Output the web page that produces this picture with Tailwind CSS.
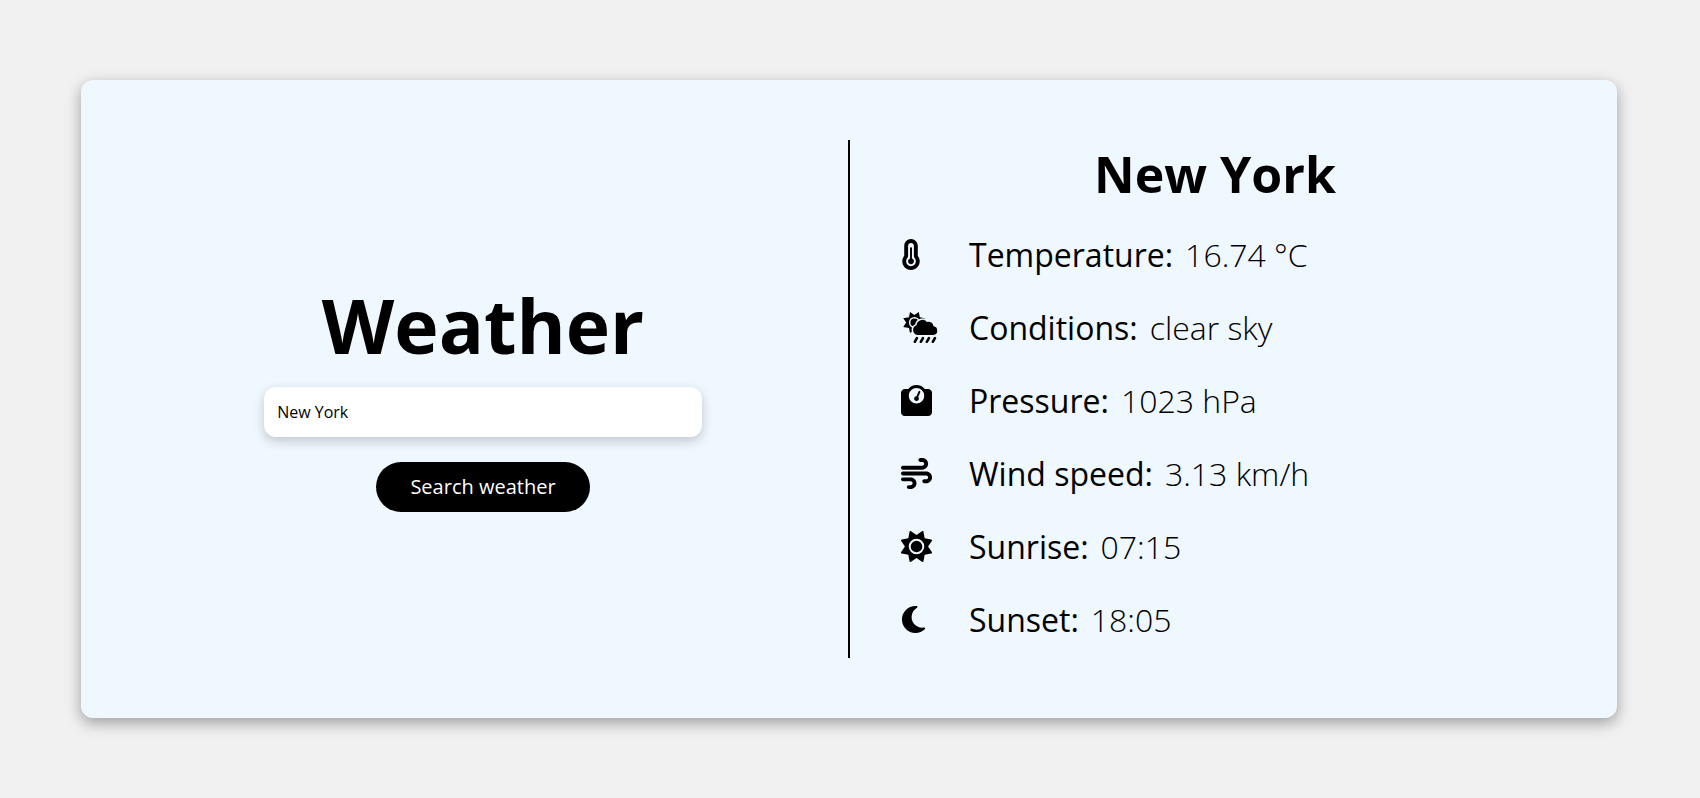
<!DOCTYPE html>
<html lang="en">
<head>
<meta charset="utf-8">
<meta name="viewport" content="width=device-width, initial-scale=1">
<title>Weather</title>
<script src="https://cdn.jsdelivr.net/npm/@tailwindcss/browser@4"></script>
</head>
<body class="flex min-h-screen items-center bg-[#f1f1f1] pr-[83px] pl-[81px] py-20 font-['Open_Sans',sans-serif] text-black">
<main class="grid w-full grid-cols-[1fr_2px_1fr] gap-x-[23px] rounded-xl bg-[#eff7ff] p-[60px] shadow-[0_5px_15px_rgba(0,0,0,0.35)]">
  <form class="flex flex-col items-center justify-center pb-3" onsubmit="return false">
    <h1 class="mb-3 text-[75px] leading-[100px] font-bold">Weather</h1>
    <input type="text" aria-label="City" value="New York" class="mb-[25px] h-[50px] w-[64%] rounded-xl bg-white px-[13px] text-base shadow-[0_4px_12px_rgba(0,0,0,0.2)] outline-none">
    <button type="submit" class="h-[50px] rounded-full bg-black px-[34px] text-xl font-medium text-white">Search weather</button>
  </form>
  <div class="bg-black"></div>
  <section class="pb-[2px]">
    <h2 class="mb-[10px] text-center text-[50px] leading-[68px] font-bold">New York</h2>
    <dl class="pl-7 text-[32px] leading-[73px] font-[350]">
      <div class="flex items-center">
        <dt class="flex items-center font-normal"><span class="w-[68px]"><svg class="h-[31px] w-5" viewBox="0 0 320 512" fill="currentColor" aria-hidden="true"><path d="M160 64c-26.5 0-48 21.5-48 48V276.5c0 17.3-7.1 31.9-15.3 42.5C86.2 332.6 80 349.5 80 368c0 44.2 35.8 80 80 80s80-35.8 80-80c0-18.5-6.2-35.4-16.7-48.9c-8.2-10.6-15.3-25.2-15.3-42.5V112c0-26.5-21.5-48-48-48zM48 112C48 50.2 98.1 0 160 0s112 50.1 112 112V276.5c0 .1 .1 .3 .2 .6c.2 .6 .8 1.6 1.7 2.8c18.9 24.4 30.1 55 30.1 88.1c0 79.5-64.5 144-144 144S16 447.5 16 368c0-33.2 11.2-63.8 30.1-88.1c.9-1.2 1.5-2.2 1.7-2.8c.1-.3 .2-.5 .2-.6V112zM208 368c0 26.5-21.5 48-48 48s-48-21.5-48-48c0-20.9 13.4-38.7 32-45.3V152c0-8.8 7.2-16 16-16s16 7.2 16 16V322.7c18.6 6.6 32 24.4 32 45.3z"/></svg></span>Temperature:</dt>
        <dd class="ml-3">16.74 °C</dd>
      </div>
      <div class="flex items-center">
        <dt class="flex items-center font-normal"><span class="w-[68px]"><svg class="h-8 w-10" viewBox="0 0 40 32" fill="currentColor" aria-hidden="true"><defs><mask id="behind-cloud"><path fill="#fff" d="M0 0h40v32H0z"/><path stroke="#000" stroke-width="3" d="M16.500 23a5 5 0 0 1-1-9.700A6 6 0 0 1 26 10A5 5 0 0 1 32.500 14.300A4.400 4.400 0 0 1 32.500 23z"/></mask></defs><g mask="url(#behind-cloud)"><path fill-rule="evenodd" d="M9 0l4.400 3L17.800 0l1 5.200 5.200 1-3 4.300 3 4.400-5.200 1-1 5.200-4.400-3-4.400 3-1-5.200-5.800-1 3-4.400-3-4.300 5.800-1zM13.400 5a5.500 5.500 0 1 0 0 11a5.500 5.500 0 0 0 0-11z"/><circle cx="13.400" cy="10.500" r="4"/></g><path d="M16.500 23a5 5 0 0 1-1-9.700A6 6 0 0 1 26 10A5 5 0 0 1 32.500 14.300A4.400 4.400 0 0 1 32.500 23z"/><path fill="none" stroke="currentColor" stroke-width="2.500" stroke-linecap="round" d="M16 26l-2.200 3.800M22 26l-2.200 3.800M28 26l-2.200 3.800M34 26l-2.200 3.800"/></svg></span>Conditions:</dt>
        <dd class="ml-3">clear sky</dd>
      </div>
      <div class="flex items-center">
        <dt class="flex items-center font-normal"><span class="w-[68px]"><svg class="size-[31px]" viewBox="0 0 512 512" fill="currentColor" aria-hidden="true"><path d="M128 176a128 128 0 1 1 256 0 128 128 0 1 1 -256 0zM391.8 64C359.5 24.9 310.7 0 256 0S152.5 24.9 120.2 64H64C28.7 64 0 92.7 0 128V448c0 35.3 28.7 64 64 64H448c35.3 0 64-28.7 64-64V128c0-35.3-28.7-64-64-64H391.8zM296 224c0-10.6-4.1-20.2-10.9-27.4l33.6-78.3c3.5-8.1-.3-17.5-8.4-21s-17.5 .3-21 8.4L255.700 184c-22 .1-39.7 18-39.7 40c0 22.100 17.900 40 40 40s40-17.900 40-40z" fill-rule="evenodd"/></svg></span>Pressure:</dt>
        <dd class="ml-3">1023 hPa</dd>
      </div>
      <div class="flex items-center">
        <dt class="flex items-center font-normal"><span class="w-[68px]"><svg class="size-[31px]" viewBox="0 0 512 512" fill="currentColor" aria-hidden="true"><path d="M288 32c0 17.7 14.3 32 32 32h32c17.7 0 32 14.3 32 32s-14.3 32-32 32H32c-17.7 0-32 14.3-32 32s14.3 32 32 32H352c53 0 96-43 96-96s-43-96-96-96H320c-17.7 0-32 14.3-32 32zm64 352c0 17.7 14.3 32 32 32h32c53 0 96-43 96-96s-43-96-96-96H32c-17.7 0-32 14.3-32 32s14.3 32 32 32H416c17.7 0 32 14.3 32 32s-14.3 32-32 32H384c-17.7 0-32 14.3-32 32zM128 512h32c53 0 96-43 96-96s-43-96-96-96H32c-17.7 0-32 14.3-32 32s14.3 32 32 32H160c17.7 0 32 14.3 32 32s-14.3 32-32 32H128c-17.7 0-32 14.3-32 32s14.3 32 32 32z"/></svg></span>Wind speed:</dt>
        <dd class="ml-3">3.13 km/h</dd>
      </div>
      <div class="flex items-center">
        <dt class="flex items-center font-normal"><span class="w-[68px]"><svg class="size-[31px]" viewBox="0 0 512 512" fill="currentColor" aria-hidden="true"><path d="M361.5 1.2c5 2.1 8.6 6.6 9.6 11.9L391 121l107.9 19.8c5.3 1 9.8 4.6 11.9 9.6s1.5 10.7-1.6 15.2L446.9 256l62.3 90.3c3.1 4.5 3.7 10.2 1.6 15.2s-6.6 8.6-11.9 9.6L391 391 371.1 498.9c-1 5.3-4.6 9.8-9.6 11.9s-10.7 1.5-15.2-1.6L256 446.9l-90.3 62.3c-4.5 3.1-10.2 3.7-15.2 1.6s-8.6-6.6-9.6-11.9L121 391 13.1 371.1c-5.3-1-9.8-4.6-11.9-9.6s-1.5-10.7 1.6-15.2L65.1 256 2.8 165.7c-3.1-4.5-3.7-10.2-1.6-15.2s6.6-8.6 11.9-9.6L121 121 140.9 13.1c1-5.3 4.6-9.8 9.6-11.900s10.700-1.500 15.200 1.600L256 65.100 346.300 2.800c4.500-3.100 10.200-3.700 15.200-1.600zM160 256a96 96 0 1 1 192 0 96 96 0 1 1 -192 0zm224 0a128 128 0 1 0 -256 0 128 128 0 1 0 256 0z"/></svg></span>Sunrise:</dt>
        <dd class="ml-3">07:15</dd>
      </div>
      <div class="flex items-center">
        <dt class="flex items-center font-normal"><span class="w-[68px]"><svg class="h-[31px] w-[27px]" viewBox="-16 0 448 512" fill="currentColor" aria-hidden="true"><path d="M223.5 32C100 32 0 132.3 0 256S100 480 223.5 480c60.6 0 115.5-24.2 155.8-63.4c5-4.9 6.3-12.5 3.1-18.7s-10.1-9.700-17-8.500c-9.800 1.700-19.800 2.600-30.100 2.600c-96.900 0-175.500-78.800-175.500-176c0-65.800 36-123.100 89.300-153.300c6.100-3.500 9.200-10.500 7.700-17.300s-7.300-11.900-14.300-12.500c-6.300-.5-12.600-.8-19-.8z"/></svg></span>Sunset:</dt>
        <dd class="ml-3">18:05</dd>
      </div>
    </dl>
  </section>
</main>
</body>
</html>
